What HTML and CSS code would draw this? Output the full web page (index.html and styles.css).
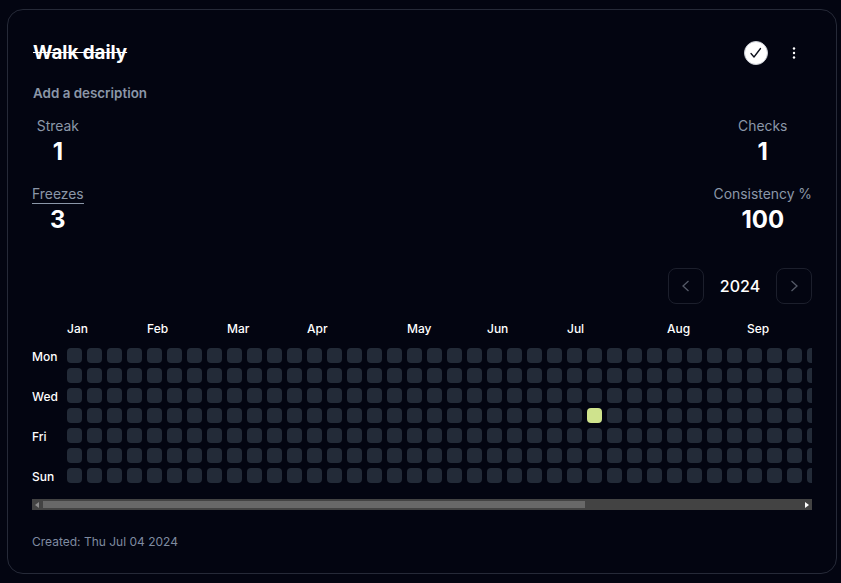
FILE: index.html
```html
<!DOCTYPE html>
<html lang="en">
<head>
    <meta charset="UTF-8">
    <meta name="viewport" content="width=device-width, initial-scale=1.0">
    <title>Walk daily</title>
    <link rel="stylesheet" href="styles.css">
</head>
<body>
    <div class="card">
        <div class="card-head">
            <h2 class="title">Walk daily</h2>
            <div class="actions">
                <button class="check-btn" type="button" aria-label="Check">
                    <svg width="12" height="12" viewBox="0 0 12 12" fill="none" stroke="#0b0f1a" stroke-width="1.3" stroke-linecap="round" stroke-linejoin="round"><path d="M1 6.500 4 10 10.500 1.500"/></svg>
                </button>
                <button class="menu-btn" type="button" aria-label="Menu">
                    <svg width="4" height="14" viewBox="0 0 4 14" fill="#fff"><circle cx="2" cy="2.500" r="1.200"/><circle cx="2" cy="7" r="1.200"/><circle cx="2" cy="11.500" r="1.200"/></svg>
                </button>
            </div>
        </div>
        <p class="description">Add a description</p>

        <div class="stats">
            <div class="stat-col">
                <div class="stat">
                    <span class="stat-label">Streak</span>
                    <span class="stat-value">1</span>
                </div>
                <div class="stat">
                    <span class="stat-label stat-link">Freezes</span>
                    <span class="stat-value">3</span>
                </div>
            </div>
            <div class="stat-col">
                <div class="stat">
                    <span class="stat-label">Checks</span>
                    <span class="stat-value">1</span>
                </div>
                <div class="stat">
                    <span class="stat-label">Consistency %</span>
                    <span class="stat-value">100</span>
                </div>
            </div>
        </div>

        <div class="year-nav">
            <button class="year-btn" type="button" aria-label="Previous year">
                <svg width="14" height="14" viewBox="0 0 14 14" fill="none" stroke="#555a68" stroke-width="1.300"><path d="M9.500 2 4 7 9.500 12"/></svg>
            </button>
            <span class="year">2024</span>
            <button class="year-btn" type="button" aria-label="Next year">
                <svg width="14" height="14" viewBox="0 0 14 14" fill="none" stroke="#555a68" stroke-width="1.300"><path d="M4.500 2 10 7 4.500 12"/></svg>
            </button>
        </div>

        <div class="calendar">
            <div class="calendar-inner">
                <div class="days">
                    <span>Mon</span>
                    <span></span>
                    <span>Wed</span>
                    <span></span>
                    <span>Fri</span>
                    <span></span>
                    <span>Sun</span>
                </div>
                <div class="months" id="months"></div>
                <div class="cells" id="cells"></div>
            </div>
        </div>

        <div class="scrollbar">
            <span class="arrow arrow-left"></span>
            <span class="thumb"></span>
            <span class="arrow arrow-right"></span>
        </div>

        <p class="created">Created: Thu Jul 04 2024</p>
    </div>
    <script src="script.js"></script>
</body>
</html>
```

FILE: styles.css
```css
* {
    box-sizing: border-box;
}

body {
    background-color: #030511;
    color: #fff;
    font-family: Inter, "Liberation Sans", sans-serif;
    margin: 0;
    padding: 9px 4px 9px 7px;
    overflow: hidden;
}

.card {
    border: 1px solid #262a38;
    border-radius: 16px;
    height: 565px;
    padding: 24px;
}

.card-head {
    display: flex;
    align-items: center;
    justify-content: space-between;
    height: 38px;
}

.title {
    margin: 0;
    padding: 0 0 2px 1px;
    font-size: 18.800px;
    font-weight: 700;
    text-decoration: line-through;
}

.actions {
    display: flex;
    align-items: center;
    gap: 24px;
    padding-right: 16px;
}

button {
    background: none;
    border: none;
    padding: 0;
    cursor: pointer;
    display: flex;
    align-items: center;
    justify-content: center;
}

.check-btn {
    width: 24px;
    height: 24px;
    border: 1px solid #c9ccd3;
    border-radius: 50%;
    background-color: #fff;
}

.description {
    margin: 11px 0 0 1px;
    font-size: 13.400px;
    line-height: 20px;
    font-weight: 600;
    color: #8b97a8;
}

.stats {
    display: flex;
    justify-content: space-between;
    margin-top: 13px;
}

.stat-col {
    display: flex;
    flex-direction: column;
    gap: 17px;
}

.stat {
    display: flex;
    flex-direction: column;
    align-items: center;
}

.stat-label {
    font-size: 13.900px;
    line-height: 20px;
    color: #8b97a8;
}

.stat-link {
    border-bottom: 1px solid #8b97a8;
    padding-top: 1px;
    line-height: 18px;
}

.stat-value {
    margin-top: 1px;
    font-size: 24px;
    line-height: 30px;
    font-weight: 700;
}

.year-nav {
    display: flex;
    align-items: center;
    justify-content: flex-end;
    margin-top: 33px;
}

.year-btn {
    width: 36px;
    height: 36px;
    border: 1px solid #1c1f2c;
    border-radius: 8px;
}

.year {
    width: 72px;
    text-align: center;
    font-size: 16px;
    font-weight: 500;
}

.calendar {
    margin-top: 15px;
    overflow: hidden;
}

.calendar-inner {
    display: grid;
    grid-template-columns: 35px auto;
    grid-template-rows: 27px auto;
    width: max-content;
}

.days {
    grid-column: 1;
    grid-row: 2;
    display: grid;
    grid-auto-rows: 20px;
    padding-top: 1px;
    font-size: 12px;
    font-weight: 450;
}

.days span {
    line-height: 20px;
}

.months {
    grid-column: 2;
    grid-row: 1;
    display: grid;
    grid-template-columns: repeat(53, 20px);
    font-size: 12px;
    line-height: 20px;
    font-weight: 450;
}

.month {
    white-space: nowrap;
}

.cells {
    grid-column: 2;
    grid-row: 2;
    display: grid;
    grid-template-rows: repeat(7, 15px);
    grid-auto-flow: column;
    grid-auto-columns: 15px;
    gap: 5px;
    padding-top: 2px;
}

.cell {
    background-color: #232b38;
    border-radius: 4px;
}

.cell-on {
    background-color: #cfe38d;
}

/* scrollbar as the browser draws it in dark mode */
.scrollbar {
    display: flex;
    align-items: center;
    height: 11px;
    margin-top: 12px;
    padding: 0 3px;
    background-color: #434343;
}

.arrow {
    width: 0;
    height: 0;
    border-top: 3px solid transparent;
    border-bottom: 3px solid transparent;
}

.arrow-left {
    border-right: 4px solid #8a8a8a;
}

.arrow-right {
    margin-left: auto;
    border-left: 4px solid #fff;
}

.thumb {
    width: 542px;
    height: 7px;
    margin-left: 4px;
    background-color: #686868;
}

.created {
    margin: 23px 0 0;
    font-size: 12px;
    line-height: 18px;
    color: #7f8ba0;
}
```

FILE: script.js
```js
// month labels sit on the week column they start in
var months = { Jan: 0, Feb: 4, Mar: 8, Apr: 12, May: 17, Jun: 21, Jul: 25, Aug: 30, Sep: 34 };
var monthRow = document.getElementById('months');
Object.keys(months).forEach(function (name) {
    var label = document.createElement('span');
    label.className = 'month';
    label.textContent = name;
    label.style.gridColumnStart = months[name] + 1;
    monthRow.appendChild(label);
});

// week 26, fourth row is Jul 04
var cells = document.getElementById('cells');
for (var i = 0; i < 53 * 7; i++) {
    var cell = document.createElement('div');
    cell.className = i === 26 * 7 + 3 ? 'cell cell-on' : 'cell';
    cells.appendChild(cell);
}
```
